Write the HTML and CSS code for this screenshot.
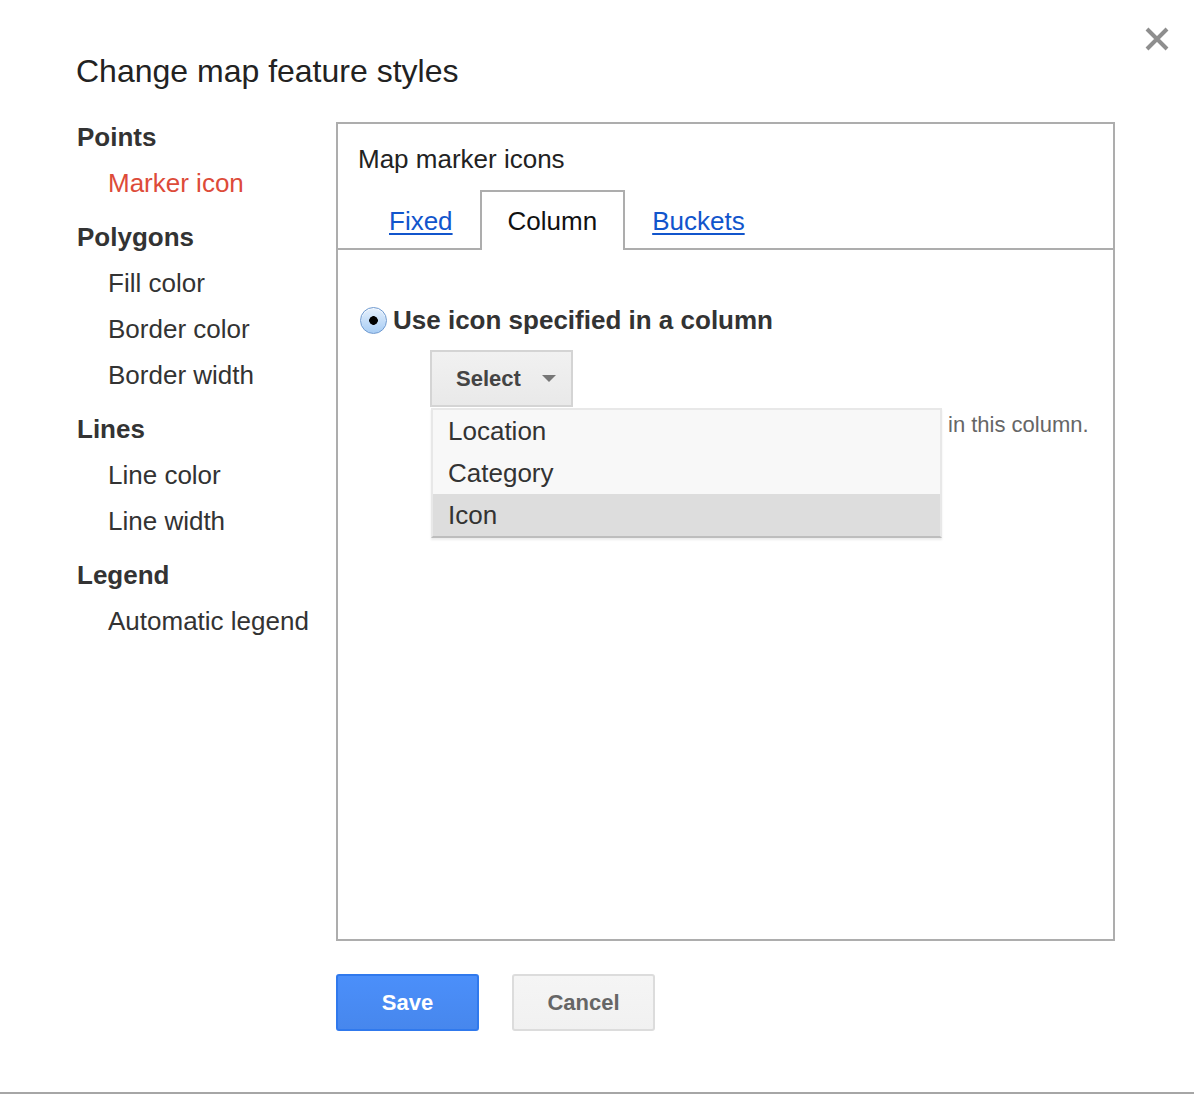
FILE: index.html
```html
<!DOCTYPE html>
<html>
<head>
<meta charset="utf-8">
<link rel="stylesheet" href="styles.css">
</head>
<body>
<div class="dialog">
  <button class="close" aria-label="Close">
    <svg width="24" height="24" viewBox="0 0 24 24"><path d="M2 2 L22 22 M22 2 L2 22" stroke="#8e8e8e" stroke-width="4" stroke-linecap="butt"/></svg>
  </button>
  <h1 class="title">Change map feature styles</h1>
  <div class="body">
    <nav class="nav">
      <div class="nav-head first">Points</div>
      <div class="nav-item active">Marker icon</div>
      <div class="nav-head">Polygons</div>
      <div class="nav-item">Fill color</div>
      <div class="nav-item">Border color</div>
      <div class="nav-item">Border width</div>
      <div class="nav-head">Lines</div>
      <div class="nav-item">Line color</div>
      <div class="nav-item">Line width</div>
      <div class="nav-head">Legend</div>
      <div class="nav-item">Automatic legend</div>
    </nav>
    <div class="main">
      <section class="panel">
        <div class="panel-title">Map marker icons</div>
        <div class="tabs">
          <a class="tab link">Fixed</a>
          <span class="tab current">Column</span>
          <a class="tab link">Buckets</a>
        </div>
        <div class="content">
          <label class="radio-row">
            <span class="radio"></span>
            <span class="radio-label">Use icon specified in a column</span>
          </label>
          <div class="select-wrap">
            <div class="select-btn">
              <span>Select</span>
              <span class="arrow"></span>
            </div>
            <ul class="menu">
              <li class="menu-item">Location</li>
              <li class="menu-item">Category</li>
              <li class="menu-item hover">Icon</li>
            </ul>
          </div>
          <div class="hint">in this column.</div>
        </div>
      </section>
      <div class="actions">
        <button class="btn primary">Save</button>
        <button class="btn secondary">Cancel</button>
      </div>
    </div>
  </div>
</div>
<div class="backdrop-strip"></div>
</body>
</html>
```

FILE: styles.css
```css
html, body {
  margin: 0;
  padding: 0;
  background: #fff;
}
body {
  font-family: "Liberation Sans", Arial, sans-serif;
  color: #333;
  width: 1194px;
  height: 1094px;
  overflow: hidden;
}
.dialog {
  position: relative;
  height: 1092px;
  box-sizing: border-box;
  padding: 51px 0 0 77px;
}
.close {
  position: absolute;
  top: 27px;
  right: 25px;
  width: 24px;
  height: 24px;
  padding: 0;
  border: 0;
  background: none;
}
.close svg { display: block; }
.title {
  margin: 0 0 0 -1px;
  font-size: 32px;
  line-height: 40px;
  font-weight: normal;
  color: #222;
}
.body {
  display: flex;
  margin-top: 23px;
}
.nav {
  width: 259px;
  flex: none;
}
.nav-head {
  font-size: 26px;
  line-height: 46px;
  font-weight: bold;
  color: #333;
  margin-top: 8px;
}
.nav-head.first { margin-top: 0; }
.nav-item {
  font-size: 26px;
  line-height: 46px;
  padding-left: 31px;
  color: #333;
}
.nav-item.active { color: #dd4b39; }
.main {
  margin-top: 8px;
}
.panel {
  width: 779px;
  height: 819px;
  box-sizing: border-box;
  border: 2px solid #adadad;
}
.panel-title {
  font-size: 26px;
  line-height: 30px;
  padding: 20px 0 0 20px;
  color: #222;
}
.tabs {
  display: flex;
  margin-top: 16px;
  padding-left: 24px;
  height: 58px;
  border-bottom: 2px solid #adadad;
}
.tab {
  font-size: 26px;
  line-height: 58px;
  height: 58px;
  padding: 0 25px;
  border: 2px solid transparent;
  border-bottom: 0;
}
.tab.link {
  color: #1155cc;
  text-decoration: underline;
  text-underline-offset: 3px;
}
.tab.current {
  color: #111;
  background: #fff;
  border-color: #adadad;
  padding: 0 26px 0 26px;
  position: relative;
  z-index: 1;
}
.content {
  padding: 55px 0 0 22px;
}
.radio-row {
  display: flex;
  align-items: center;
  height: 30px;
}
.radio {
  width: 25px;
  height: 25px;
  border-radius: 50%;
  border: 1px solid #6f9ad0;
  background: radial-gradient(circle at 50% 50%, #000 0 4px, transparent 4.6px),
              linear-gradient(#e4effc, #a8cdf4);
  box-shadow: inset 0 1px 1px rgba(255,255,255,.8);
  flex: none;
}
.radio-label {
  margin-left: 6px;
  font-size: 26px;
  font-weight: bold;
  color: #333;
}
.select-wrap {
  position: relative;
  margin: 15px 0 0 70px;
  width: 143px;
}
.select-btn {
  box-sizing: border-box;
  width: 143px;
  height: 57px;
  border: 2px solid #d4d4d4;
  background: linear-gradient(#f1f1f1, #e9e9e9);
  display: flex;
  align-items: center;
  padding-left: 24px;
  font-size: 22px;
  font-weight: bold;
  color: #444;
}
.arrow {
  margin-left: 21px;
  width: 0;
  height: 0;
  border-left: 7px solid transparent;
  border-right: 7px solid transparent;
  border-top: 7px solid #777;
}
.menu {
  position: absolute;
  top: 58px;
  left: 1px;
  width: 511px;
  box-sizing: border-box;
  margin: 0;
  padding: 0;
  list-style: none;
  background: #f8f8f8;
  border: 2px solid #e8e8e8;
  border-bottom-color: #bdbdbd;
  box-shadow: 0 2px 2px rgba(0,0,0,.08);
  z-index: 2;
}
.menu-item {
  height: 42px;
  line-height: 42px;
  font-size: 26px;
  padding-left: 15px;
  color: #333;
}
.menu-item.hover { background: #dddddd; }
.hint {
  margin: 3px 0 0 588px;
  font-size: 22px;
  line-height: 30px;
  color: #666;
}
.actions {
  display: flex;
  gap: 33px;
  margin-top: 33px;
}
.btn {
  box-sizing: border-box;
  width: 143px;
  height: 57px;
  border-radius: 3px;
  font-family: "Liberation Sans", Arial, sans-serif;
  font-size: 22px;
  font-weight: bold;
  padding: 0;
}
.btn.primary {
  background: linear-gradient(#4b8ffa, #4787ed);
  border: 2px solid #3079ed;
  color: #fff;
}
.btn.secondary {
  background: linear-gradient(#f5f5f5, #f1f1f1);
  border: 2px solid #dcdcdc;
  color: #666;
}
.backdrop-strip {
  height: 2px;
  background: #a6a6a6;
}
```
